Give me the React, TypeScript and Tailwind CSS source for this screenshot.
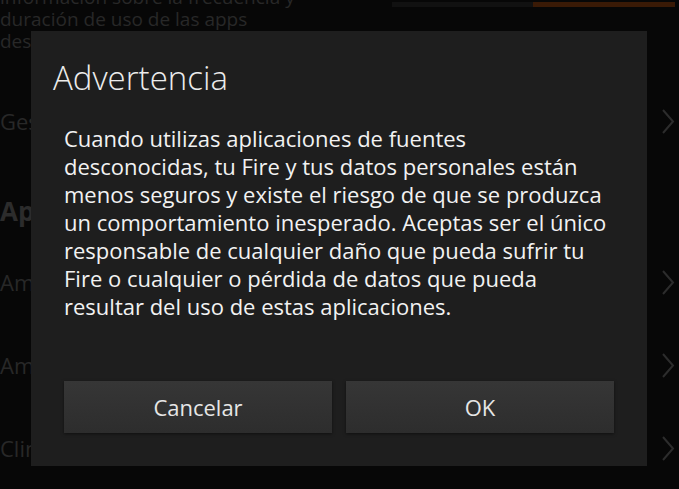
import React from "react";

const Chevron = () => (
  <svg width="14" height="25" viewBox="0 0 14 25" fill="none" className="shrink-0">
    <polyline points="2,1 12,12.5 2,24" stroke="#2c2c2c" strokeWidth="2" strokeLinejoin="miter" />
  </svg>
);

const bodyLines = [
  "Cuando utilizas aplicaciones de fuentes",
  "desconocidas, tu Fire y tus datos personales están",
  "menos seguros y existe el riesgo de que se produzca",
  "un comportamiento inesperado. Aceptas ser el único",
  "responsable de cualquier daño que pueda sufrir tu",
  "Fire o cualquier o pérdida de datos que pueda",
  "resultar del uso de estas aplicaciones.",
];

export default function App() {
  const font = { fontFamily: '"Open Sans", "Noto Sans", sans-serif' };
  return (
    <div
      className="relative w-[679px] h-[489px] overflow-hidden bg-[#070707] text-[#282828]"
      style={font}
    >
      {/* background settings page */}
      <div className="flex flex-col w-full h-full">
        <div className="relative h-[80px] shrink-0">
          <div className="absolute left-[392px] top-[2px] w-[141px] h-[5px] bg-[#111111]" />
          <div className="absolute left-[533px] top-[2px] w-[142px] h-[5px] bg-[#3a1a06]" />
          <div className="-mt-[14px] text-[19px] leading-[22px] whitespace-nowrap">
            <div>información sobre la frecuencia y</div>
            <div>duración de uso de las apps</div>
            <div className="w-[31px] overflow-hidden">desconocidas.</div>
          </div>
        </div>
        <div className="h-[82px] shrink-0 flex items-center justify-between pr-[4px]">
          <span className="block w-[31px] overflow-hidden text-[22px] whitespace-nowrap">Gestionar</span>
          <Chevron />
        </div>
        <div className="h-[79px] shrink-0 flex items-center pt-[20px]">
          <span className="block w-[31px] overflow-hidden text-[26px] font-bold whitespace-nowrap text-[#2c2c2c]">Aplicaciones</span>
        </div>
        <div className="h-[83px] shrink-0 flex items-center justify-between pr-[4px]">
          <span className="block w-[31px] overflow-hidden text-[22px] whitespace-nowrap">Amazon</span>
          <Chevron />
        </div>
        <div className="h-[83px] shrink-0 flex items-center justify-between pr-[4px]">
          <span className="block w-[31px] overflow-hidden text-[22px] whitespace-nowrap">Amazon</span>
          <Chevron />
        </div>
        <div className="h-[83px] shrink-0 flex items-center justify-between pr-[4px]">
          <span className="block w-[31px] overflow-hidden text-[22px] whitespace-nowrap">Clima</span>
          <Chevron />
        </div>
      </div>

      {/* dialog */}
      <div className="absolute left-[31px] top-[31px] w-[616px] h-[435px] bg-[#1e1e1e] flex flex-col">
        <div className="pl-[22px] pt-[27px] h-[66px] text-[33px] leading-[40px] font-light text-[#ececec] whitespace-nowrap">
          Advertencia
        </div>
        <div className="pl-[33px] pt-[27px] text-[22px] leading-[28px] text-[#f2f2f2] whitespace-nowrap">
          {bodyLines.map((l) => (
            <div key={l}>{l}</div>
          ))}
        </div>
        <div className="mt-auto px-[33px] pb-[33px] flex gap-[14px]">
          <button className="flex-1 h-[52px] bg-gradient-to-b from-[#363636] to-[#2d2d2d] text-[22px] text-[#e6e6e6] shadow-[0_1px_3px_rgba(0,0,0,0.5)]">
            Cancelar
          </button>
          <button className="flex-1 h-[52px] bg-gradient-to-b from-[#363636] to-[#2d2d2d] text-[22px] text-[#e6e6e6] shadow-[0_1px_3px_rgba(0,0,0,0.5)]">
            OK
          </button>
        </div>
      </div>
    </div>
  );
}
